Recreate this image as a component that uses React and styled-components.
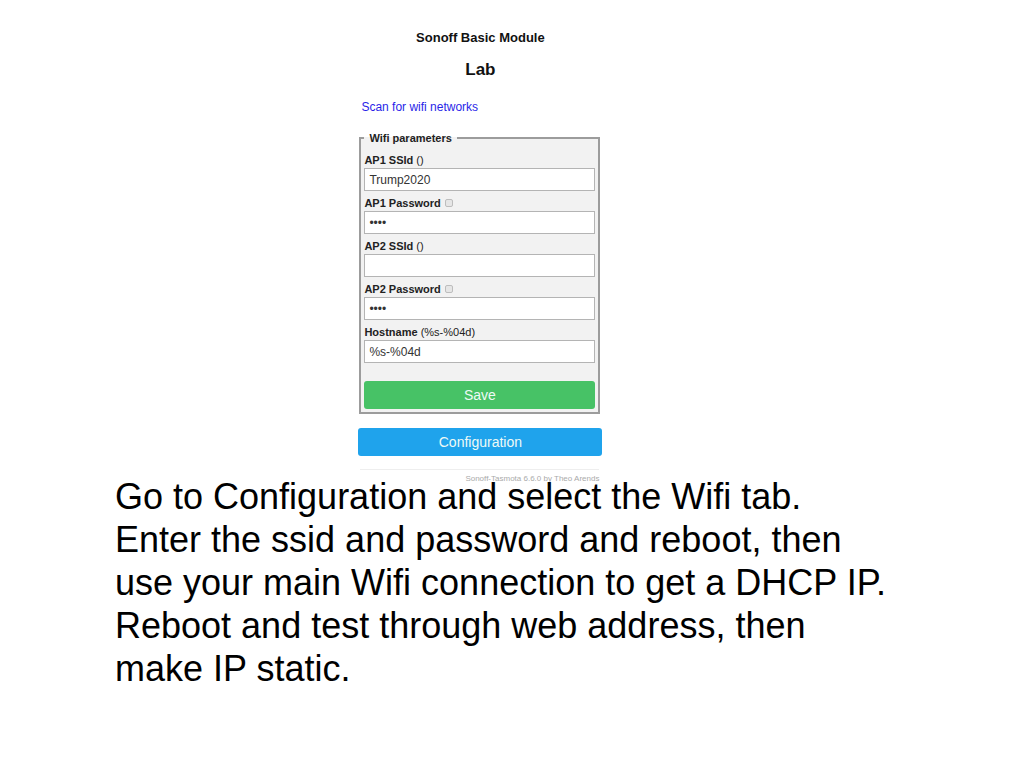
import React, { useState } from "react";
import styled, { createGlobalStyle } from "styled-components";

const GlobalStyle = createGlobalStyle`
  body {
    margin: 0;
    background: white;
    font-family: "Liberation Sans", Arial, sans-serif;
  }
`;

const Slide = styled.main`
  padding: 28px 0 40px;
`;

const Module = styled.form`
  width: 244px;
  margin-left: 35%;
  font-size: 12px;
  color: #222222;

  header {
    text-align: center;
    color: #111111;
  }
  h3 {
    margin: 0 0 12px;
    font-size: 13px;
    line-height: 20px;
  }
  h2 {
    margin: 0 0 20px;
    font-size: 17px;
    line-height: 20px;
  }
`;

const ScanLink = styled.a`
  display: block;
  margin: 0 3px 17px;
  line-height: 14px;
  color: #2a1fe8;
  text-decoration: none;
`;

const Fieldset = styled.fieldset`
  margin: 0 2px 14px 1px;
  padding: 3px;
  border: 2px solid #9c9c9c;
  background: #f2f2f2;

  legend {
    padding: 0 5px;
    font-size: 11px;
    font-weight: bold;
    line-height: 14px;
  }
`;

const Field = styled.div`
  .name {
    display: flex;
    align-items: center;
    gap: 4px;
    height: 20px;
    padding-top: 4px;
    box-sizing: border-box;
    font-size: 11px;
  }
  .toggle {
    appearance: none;
    width: 8px;
    height: 8px;
    margin: 0;
    border: 1px solid #bdbdbd;
    border-radius: 2px;
    background: #e6e6e6;
    &:checked {
      background: #1fa3ec;
    }
  }
  .value {
    display: block;
    width: 100%;
    height: 23px;
    padding: 0 4px;
    box-sizing: border-box;
    border: 1px solid #b4b4b4;
    background: white;
    color: #333333;
    font-family: inherit;
    font-size: 12px;
  }
`;

const Button = styled.button`
  display: block;
  width: 100%;
  height: 28px;
  margin-top: ${(props) => props.$top || 0}px;
  padding: 0;
  border: 0;
  border-radius: 3px;
  background: ${(props) => props.$color};
  color: #eefaf6;
  font-family: inherit;
  font-size: 14px;
  cursor: pointer;
`;

const Footer = styled.footer`
  margin: 13px 3px 0 2px;
  padding-top: 3px;
  border-top: 1px solid #eeeeee;
  text-align: right;
  font-size: 8px;
  line-height: 12px;

  a {
    color: #aaaaaa;
    text-decoration: none;
  }
`;

/* the caption runs slightly over the module's footer line */
const Caption = styled.p`
  position: relative;
  max-width: 800px;
  margin: -10px 0 0;
  padding-left: 115px;
  color: black;
  font-size: 36px;
  line-height: 43px;
`;

const fields = [
  { id: "s1", name: "AP1 SSId", hint: "()", value: "Trump2020" },
  { id: "p1", name: "AP1 Password", value: "****", secret: true },
  { id: "s2", name: "AP2 SSId", hint: "()", value: "" },
  { id: "p2", name: "AP2 Password", value: "****", secret: true },
  { id: "h", name: "Hostname", hint: "(%s-%04d)", value: "%s-%04d" },
];

function WifiField({ id, name, hint, value, secret }) {
  const [shown, setShown] = useState(false);
  return (
    <Field>
      <div className="name">
        <label htmlFor={id}>
          <b>{name}</b> {hint}
        </label>
        {secret && (
          <input
            className="toggle"
            type="checkbox"
            aria-label={`Show ${name}`}
            checked={shown}
            onChange={() => setShown(!shown)}
          />
        )}
      </div>
      <input
        className="value"
        id={id}
        type={secret && !shown ? "password" : "text"}
        defaultValue={value}
      />
    </Field>
  );
}

export default function App() {
  return (
    <Slide>
      <GlobalStyle />
      <Module onSubmit={(e) => e.preventDefault()}>
        <header>
          <h3>Sonoff Basic Module</h3>
          <h2>Lab</h2>
        </header>
        <ScanLink href="#scan">Scan for wifi networks</ScanLink>
        <Fieldset>
          <legend>Wifi parameters</legend>
          {fields.map((field) => (
            <WifiField key={field.id} {...field} />
          ))}
          <Button type="submit" $color="#47c266" $top={18}>
            Save
          </Button>
        </Fieldset>
        <Button type="button" $color="#1fa3ec">
          Configuration
        </Button>
        <Footer>
          <a href="#about">Sonoff-Tasmota 6.6.0 by Theo Arends</a>
        </Footer>
      </Module>
      <Caption>
        Go to Configuration and select the Wifi tab.
        <br />
        Enter the ssid and password and reboot, then
        <br />
        use your main Wifi connection to get a DHCP IP.
        <br />
        Reboot and test through web address, then
        <br />
        make IP static.
      </Caption>
    </Slide>
  );
}
